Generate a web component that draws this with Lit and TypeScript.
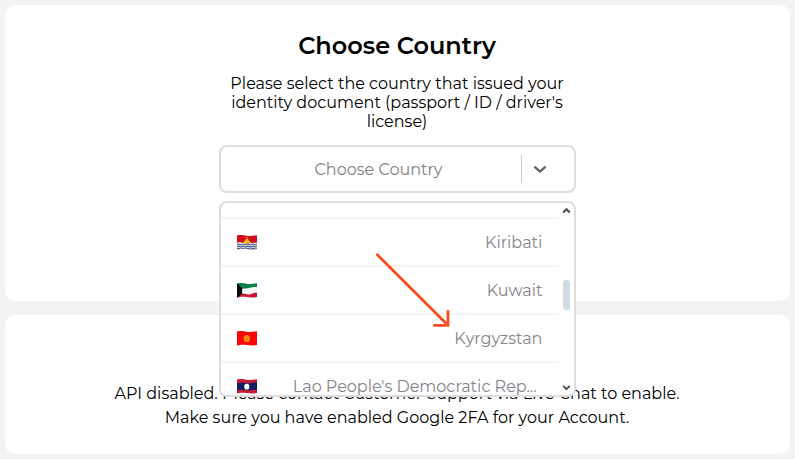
import { LitElement, html, css, svg, TemplateResult } from "lit";
import { customElement } from "lit/decorators.js";

const kiribati = svg`
  <rect width="21" height="14" fill="#d00f1a"/>
  <path d="M5.4 7.6 L8.4 5.2 L9.4 3.4 H11.4 L12.4 5.2 L15.4 7.6Z" fill="#f9b51a"/>
  <path d="M8.4 1.6 L10.3 2.6 L12.4 1.4 L11 3.2 H9.6Z" fill="#e8941c"/>
  <path d="M0 7.2 Q3 6.4 6 7.2 T12 7.8 T21 7 V14 H0Z" fill="#e9ebf3"/>
  <path d="M0 8.8 q1.3 -.8 2.6 0 t2.6 0 t2.6 0 t2.6 0 t2.6 0 t2.6 0 t2.6 0 t2.8 0 M0 10.8 q1.3 -.8 2.6 0 t2.6 0 t2.6 0 t2.6 0 t2.6 0 t2.6 0 t2.6 0 t2.8 0 M0 12.8 q1.3 -.8 2.6 0 t2.6 0 t2.6 0 t2.6 0 t2.6 0 t2.6 0 t2.6 0 t2.8 0" fill="none" stroke="#3f4f87" stroke-width=".95"/>`;

const kuwait = svg`
  <rect width="21" height="14" fill="#f6f6f6"/>
  <path d="M0 0 H21 V4 C15 3.2 12 6 5 5 L0 4.6Z" fill="#0f7f45"/>
  <path d="M0 10 C6 8.8 9 11.4 14 10.4 S18 9 21 9.3 V14 H0Z" fill="#c8183a"/>
  <path d="M0 0 L5.4 5 V9.8 L0 14.4Z" fill="#0a0a0a"/>`;

const kyrgyzstan = svg`
  <rect width="21" height="14" fill="#fa0404"/>
  <circle cx="10.3" cy="7" r="3.3" fill="#f39a10"/>
  <circle cx="10.3" cy="7" r="1.6" fill="#f5860f" stroke="#d9720f" stroke-width=".6"/>`;

const laos = svg`
  <rect width="21" height="14" fill="#c61a36"/>
  <path d="M0 4.2 C5 2.6 9 4.6 13 4.2 S18 3 21 3.6 V10.2 C16 9.6 14 11 9 10.6 S4 9.8 0 10.5Z" fill="#0d1f5f"/>
  <circle cx="10.3" cy="7.2" r="2.7" fill="#fff"/>`;

interface Country { name: string; flag: TemplateResult | null; }

const COUNTRIES: Country[] = [
  { name: "Kenya", flag: null },
  { name: "Kiribati", flag: kiribati },
  { name: "Kuwait", flag: kuwait },
  { name: "Kyrgyzstan", flag: kyrgyzstan },
  { name: "Lao People's Democratic Rep...", flag: laos },
];

@customElement("country-option")
export class CountryOption extends LitElement {
  static properties = { country: { attribute: false } };
  declare country: Country;

  static styles = css`
    :host {
      display: flex;
      align-items: center;
      justify-content: space-between;
      box-sizing: border-box;
      height: 48px;
      padding: 0 16.6px 0 16px;
      border-bottom: 2px solid #f3f3f3;
      color: #84848c;
    }
    :host([clipped]) { padding-right: 22.4px; }
    svg { display: block; width: 20px; height: 15px; }
    .name { white-space: nowrap; margin-left: auto; }
  `;

  render() {
    const wave = "M0 0.4 C3.5 -0.5 6.5 0.1 10 0.7 S17 0.7 21 0.2 V14 C17 14.8 14 14.6 10 14.1 S4 13.7 0 14.5Z";
    return html`
      ${this.country.flag
        ? html`<svg viewBox="0 0 21 15" preserveAspectRatio="none">
            <clipPath id="wave"><path d=${wave} /></clipPath>
            <g clip-path="url(#wave)"><g transform="scale(1 1.07)">${this.country.flag}</g></g>
          </svg>`
        : null}
      <span class="name">${this.country.name}</span>
    `;
  }
}

@customElement("app-root")
export class AppRoot extends LitElement {
  static styles = css`
    :host {
      display: flex;
      flex-direction: column;
      gap: 14px;
      box-sizing: border-box;
      height: 459px;
      padding: 5px;
      overflow: hidden;
      position: relative;
      background: #f3f3f3;
      color: #000;
      font: 16px/19px Montserrat, sans-serif;
      text-align: center;
    }
    .card { box-sizing: border-box; background: #fff; border-radius: 10px; }
    .choose {
      height: 296px;
      padding-top: 26px;
      display: flex;
      flex-direction: column;
      align-items: center;
    }
    h1 { margin: 0; padding-right: 1px; font-size: 24px; line-height: 29px; font-weight: 600; }
    .lead { box-sizing: border-box; width: 357px; margin: 14px 0; padding-right: 1px; }
    .field { position: relative; width: 357px; }
    .select {
      display: flex;
      align-items: center;
      box-sizing: border-box;
      height: 48px;
      border: 2px solid #ddd;
      border-radius: 8px;
      background: #fff;
    }
    .placeholder { flex: 1; color: #808080; padding-left: 15px; }
    .divider { width: 1px; height: 28px; background: #ccc; }
    .arrow { width: 52px; }
    .arrow svg { margin-left: 10px; }
    .menu {
      position: absolute;
      top: 56px;
      left: 0;
      z-index: 1;
      display: flex;
      box-sizing: border-box;
      width: 357px;
      height: 196px;
      border: 2px solid #ddd;
      border-radius: 8px;
      background: #fff;
      overflow: hidden;
    }
    .list { width: 338px; margin-top: -32px; }
    .scroll {
      flex: 1;
      display: flex;
      flex-direction: column;
      align-items: center;
      padding: 4px 1px 4px 0;
      box-sizing: border-box;
    }
    .thumb { width: 7px; height: 30px; margin: 66px 0 auto; border-radius: 3px; background: #d0dce5; }
    .pointer { position: absolute; z-index: 2; left: 374px; top: 250px; }
    .notice { height: 139px; padding: 67px 1px 0 0; line-height: 24px; }
    .notice p { margin: 0; }
    svg { display: block; }
  `;

  render() {
    return html`
      <section class="card choose">
        <h1>Choose Country</h1>
        <div class="lead">Please select the country that issued your identity document (passport / ID / driver's license)</div>
        <div class="field">
          <div class="select">
            <span class="placeholder">Choose Country</span>
            <span class="divider"></span>
            <span class="arrow">
              <svg width="16" height="12" viewBox="0 0 16 12">
                <path d="M3 4.2 L8 8.7 L13 4.2" fill="none" stroke="#666" stroke-width="2.4" stroke-linecap="round" stroke-linejoin="round"/>
              </svg>
            </span>
          </div>
          <div class="menu">
            <div class="list">
              ${COUNTRIES.map((c) => html`<country-option .country=${c} ?clipped=${c.name.endsWith("...")}></country-option>`)}
            </div>
            <div class="scroll">
              <svg width="9" height="7" viewBox="0 0 9 7"><path d="M1.2 5.5 L4.5 2.2 L7.8 5.5" fill="none" stroke="#505050" stroke-width="2"/></svg>
              <div class="thumb"></div>
              <svg width="9" height="7" viewBox="0 0 9 7"><path d="M1.2 1.9 L4.5 5.2 L7.8 1.9" fill="none" stroke="#505050" stroke-width="2"/></svg>
            </div>
          </div>
        </div>
      </section>
      <section class="card notice">
        <p>API disabled. Please contact Customer Support via Live Chat to enable.</p>
        <p>Make sure you have enabled Google 2FA for your Account.</p>
      </section>
      <svg class="pointer" width="80" height="80" viewBox="0 0 80 80">
        <path d="M3.3 4.7 L73.5 74.8 M60.3 75.3 H74 V61.5" fill="none" stroke="#fa4d1e" stroke-width="2.8" stroke-linecap="round"/>
      </svg>
    `;
  }
}
